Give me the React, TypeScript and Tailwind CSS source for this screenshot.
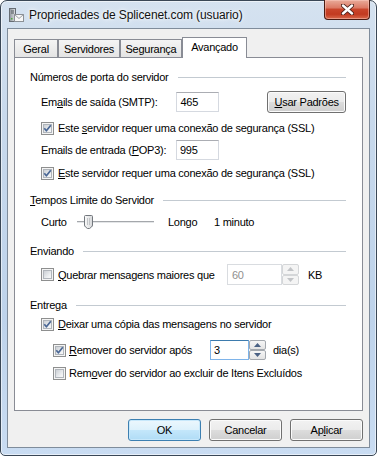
import React from "react";

function Check({ checked }: { checked: boolean }) {
  return (
    <span className="relative block w-[13px] h-[13px] shrink-0 border border-[#8e8f8f] bg-[#f4f4f4] p-[1px]">
      <span className="block w-[9px] h-[9px] border border-[#b0b5bb] bg-[linear-gradient(135deg,#cbcfd4,#eef0f2_70%,#f8f8f8)]"></span>
      {checked && (
        <svg className="absolute -left-px -top-px" width="13" height="13" viewBox="0 0 13 13">
          <path d="M3.3 6.3 L5.4 8.8 L9.8 3.3" fill="none" stroke="#4a6795" strokeWidth="1.7" strokeLinejoin="round" />
        </svg>
      )}
    </span>
  );
}

function Btn({ children, primary, className }: { children: React.ReactNode; primary?: boolean; className: string }) {
  return (
    <div
      className={
        "flex items-center justify-center rounded-[3px] border " +
        (primary
          ? "border-[#3c7fb1] bg-[linear-gradient(#ecf7fd,#dcf1fc_50%,#c4e7fb_50%,#b0dcf6)] shadow-[inset_0_0_0_1px_#c7e8fb] "
          : "border-[#707070] bg-[linear-gradient(#f2f2f2,#ebebeb_50%,#dddddd_50%,#cfcfcf)] shadow-[inset_0_0_0_1px_#fbfbfb] ") +
        className
      }
    >
      {children}
    </div>
  );
}

function Header({ children, className }: { children: React.ReactNode; className: string }) {
  return (
    <div className={"flex items-center h-[14px] gap-[9px] " + className}>
      <span className="whitespace-nowrap">{children}</span>
      <div className="flex-1 h-px bg-[#c3cad1]"></div>
    </div>
  );
}

function Arrow({ up, color }: { up: boolean; color: string }) {
  return (
    <svg width="7" height="4" viewBox="0 0 7 4">
      <path d={up ? "M0 4 L3.5 0 L7 4 Z" : "M0 0 L7 0 L3.5 4 Z"} fill={color} />
    </svg>
  );
}

function SpinButtons({ disabled }: { disabled?: boolean }) {
  const c = disabled ? "#c2c4c7" : "#4a6184";
  const half =
    "flex-1 flex items-center justify-center rounded-[2px] border " +
    (disabled
      ? "border-[#d4d6d8] bg-[#f4f4f4]"
      : "border-[#a3a8ae] bg-[linear-gradient(#f6f6f6,#e4e4e4)]");
  return (
    <div className="w-[17px] h-full flex flex-col bg-white">
      <div className={half}>
        <Arrow up color={c} />
      </div>
      <div className={half}>
        <Arrow up={false} color={c} />
      </div>
    </div>
  );
}

function WinIcon() {
  return (
    <svg width="16" height="16" viewBox="0 0 16 16">
      <defs>
        <linearGradient id="tw" x1="0" x2="1" y1="0" y2="0">
          <stop offset="0" stopColor="#8f969d" />
          <stop offset="1" stopColor="#dfe2e5" />
        </linearGradient>
      </defs>
      <rect x="1.5" y="1.5" width="6" height="13" fill="url(#tw)" stroke="#666d74" />
      <rect x="3" y="3.5" width="3" height="1" fill="#545a60" />
      <rect x="3" y="5.5" width="3" height="1" fill="#545a60" />
      <rect x="3" y="11" width="1.5" height="1.5" fill="#4fae3f" />
      <rect x="6.5" y="7.5" width="9" height="7" fill="#f7f7f7" stroke="#8b9096" />
      <path d="M6.5 7.5 L11 11.5 L15.5 7.5" fill="none" stroke="#9aa0a6" />
    </svg>
  );
}

export default function App() {
  return (
    <div className="w-[377px] h-[456px] bg-white font-['Liberation_Sans',Arial,sans-serif] text-[11px] leading-[14px] tracking-[-0.25px] text-black">
      <div className="w-full h-full flex flex-col rounded-t-[7px] rounded-b-[5px] border border-[#3a4756] bg-[linear-gradient(180deg,#d5e2f0_0%,#c8d9ec_25%,#bed3eb_70%,#c9dcf2_100%)] shadow-[inset_0_0_0_1px_rgba(255,255,255,0.55)]">
        {/* title bar */}
        <div className="h-[27px] flex items-start shrink-0">
          <div className="ml-[7px] mt-[6px]">
            <WinIcon />
          </div>
          <div className="ml-[5px] mt-[7px] text-[12px] tracking-[-0.1px] text-[#111] [text-shadow:0_0_6px_#ffffff,0_0_3px_#ffffff]">
            Propriedades de Splicenet.com (usuario)
          </div>
          <div className="ml-auto mr-[6px] -mt-px w-[46px] h-[20px] rounded-b-[4px] border border-t-0 border-[#4a1b12] bg-[linear-gradient(#e9ab9a_0%,#dc7b66_40%,#c9452b_50%,#c23a20_75%,#d9694c_100%)] shadow-[inset_0_0_0_1px_rgba(255,210,200,0.45)] flex items-center justify-center">
            <svg width="13" height="11" viewBox="0 0 13 11">
              <path d="M2 1.5 L11 9.5 M11 1.5 L2 9.5" stroke="#4a1f18" strokeWidth="4.2" strokeLinecap="round" />
              <path d="M2 1.5 L11 9.5 M11 1.5 L2 9.5" stroke="#ffffff" strokeWidth="2.4" strokeLinecap="round" />
            </svg>
          </div>
        </div>

        {/* client */}
        <div className="mx-[6px] h-[420px] shrink-0 border border-[#7f8c9b] bg-[#f0f0f0] px-[6px] pt-[8px] flex flex-col">
          {/* tabs */}
          <div className="flex items-end h-[20px] relative z-10">
            <div className="w-[44px] h-[18px] border border-b-0 border-[#898c95] bg-[linear-gradient(#f4f4f4,#e4e4e4)] flex items-center justify-center">
              Geral
            </div>
            <div className="w-[62px] h-[18px] border border-b-0 border-[#898c95] bg-[linear-gradient(#f4f4f4,#e4e4e4)] flex items-center justify-center">
              Servidores
            </div>
            <div className="w-[62px] h-[18px] border border-b-0 border-[#898c95] bg-[linear-gradient(#f4f4f4,#e4e4e4)] flex items-center justify-center">
              Segurança
            </div>
            <div className="w-[65px] h-[21px] -mb-px border border-b-0 border-[#898c95] bg-white flex items-start justify-center pt-[2px]">
              Avançado
            </div>
          </div>

          {/* panel */}
          <div className="w-[349px] h-[354px] border border-[#898c95] bg-white pl-[15px] pr-[16px] flex flex-col">
            <Header className="mt-[12px]">Números de porta do servidor</Header>

            <div className="mt-[7px] h-[22px] flex items-center ml-[11px]">
              <span className="w-[136px] whitespace-nowrap">
                Em<u>a</u>ils de saída (SMTP):
              </span>
              <div className="w-[43px] h-[20px] border border-[#d5d9e0] border-t-[#abadb3] bg-white pl-[3px] flex items-center">
                465
              </div>
              <Btn className="ml-[48px] w-[79px] h-[22px]">
                <span>
                  <u>U</u>sar Padrões
                </span>
              </Btn>
            </div>

            <div className="mt-[8px] h-[14px] flex items-center gap-[4px] ml-[11px]">
              <Check checked />
              <span className="whitespace-nowrap">
                Este <u>s</u>ervidor requer uma conexão de segurança (SSL)
              </span>
            </div>

            <div className="mt-[5px] h-[20px] flex items-center ml-[11px]">
              <span className="w-[135px] whitespace-nowrap">
                Emails de entrada (<u>P</u>OP3):
              </span>
              <div className="w-[43px] h-[20px] border border-[#d5d9e0] border-t-[#abadb3] bg-white pl-[3px] flex items-center">
                995
              </div>
            </div>

            <div className="mt-[6px] h-[14px] flex items-center gap-[4px] ml-[11px]">
              <Check checked />
              <span className="whitespace-nowrap">
                <u>E</u>ste servidor requer uma conexão de segurança (SSL)
              </span>
            </div>

            <Header className="mt-[13px]">
              <span>
                <u>T</u>empos Limite do Servidor
              </span>
            </Header>

            <div className="mt-[8px] h-[14px] flex items-center ml-[11px]">
              <span className="w-[36px]">Curto</span>
              <div className="relative w-[77px] h-[14px] flex items-center">
                <div className="w-full h-[3px] border-t border-[#a4a7ab] bg-[#e4e6e8] border-b border-b-white"></div>
                <svg className="absolute left-[7px] top-0" width="9" height="14" viewBox="0 0 9 14">
                  <defs>
                    <linearGradient id="th" x1="0" x2="1" y1="0" y2="0">
                      <stop offset="0" stopColor="#fbfbfb" />
                      <stop offset="1" stopColor="#d6d8da" />
                    </linearGradient>
                  </defs>
                  <path d="M1.5 0.5 H7.5 Q8.5 0.5 8.5 1.5 V10 Q8.5 11 7.5 12 L5.5 13.5 H3.5 L1.5 12 Q0.5 11 0.5 10 V1.5 Q0.5 0.5 1.5 0.5 Z" fill="url(#th)" stroke="#72777d" />
                  <path d="M3.5 3 V10 M5.5 3 V10" stroke="#c1c4c7" />
                </svg>
              </div>
              <span className="ml-[14px] w-[46px]">Longo</span>
              <span>1 minuto</span>
            </div>

            <Header className="mt-[15px]">Enviando</Header>

            <div className="mt-[6px] h-[21px] flex items-center ml-[11px]">
              <div className="w-[186px] flex items-center gap-[4px]">
                <Check checked={false} />
                <span className="whitespace-nowrap">
                  <u>Q</u>uebrar mensagens maiores que
                </span>
              </div>
              <div className="w-[72px] h-[21px] flex">
                <div className="flex-1 border border-[#d9dce0] bg-white pl-[4px] flex items-center text-[#8f8f8f]">60</div>
                <SpinButtons disabled />
              </div>
              <span className="ml-[9px]">KB</span>
            </div>

            <Header className="mt-[13px]">Entrega</Header>

            <div className="mt-[5px] h-[14px] flex items-center gap-[4px] ml-[11px]">
              <Check checked />
              <span className="whitespace-nowrap">
                <u>D</u>eixar uma cópia das mensagens no servidor
              </span>
            </div>

            <div className="mt-[9px] h-[20px] flex items-center ml-[23px]">
              <div className="w-[157px] flex items-center gap-[3px]">
                <Check checked />
                <span className="whitespace-nowrap">
                  <u>R</u>emover do servidor após
                </span>
              </div>
              <div className="w-[56px] h-[20px] flex">
                <div className="flex-1 border border-[#7eb4ea] border-t-[#3d7bad] bg-white pl-[3px] flex items-center">3</div>
                <SpinButtons />
              </div>
              <span className="ml-[7px]">dia(s)</span>
            </div>

            <div className="mt-[6px] h-[14px] flex items-center gap-[3px] ml-[23px]">
              <Check checked={false} />
              <span className="whitespace-nowrap">
                Rem<u>o</u>ver do servidor ao excluir de Itens Excluídos
              </span>
            </div>
          </div>

          {/* buttons */}
          <div className="mt-[8px] flex justify-end gap-[8px]">
            <Btn primary className="w-[73px] h-[22px]">
              OK
            </Btn>
            <Btn className="w-[73px] h-[22px]">Cancelar</Btn>
            <Btn className="w-[73px] h-[22px]">
              <span>
                Ap<u>l</u>icar
              </span>
            </Btn>
          </div>
        </div>
      </div>
    </div>
  );
}
